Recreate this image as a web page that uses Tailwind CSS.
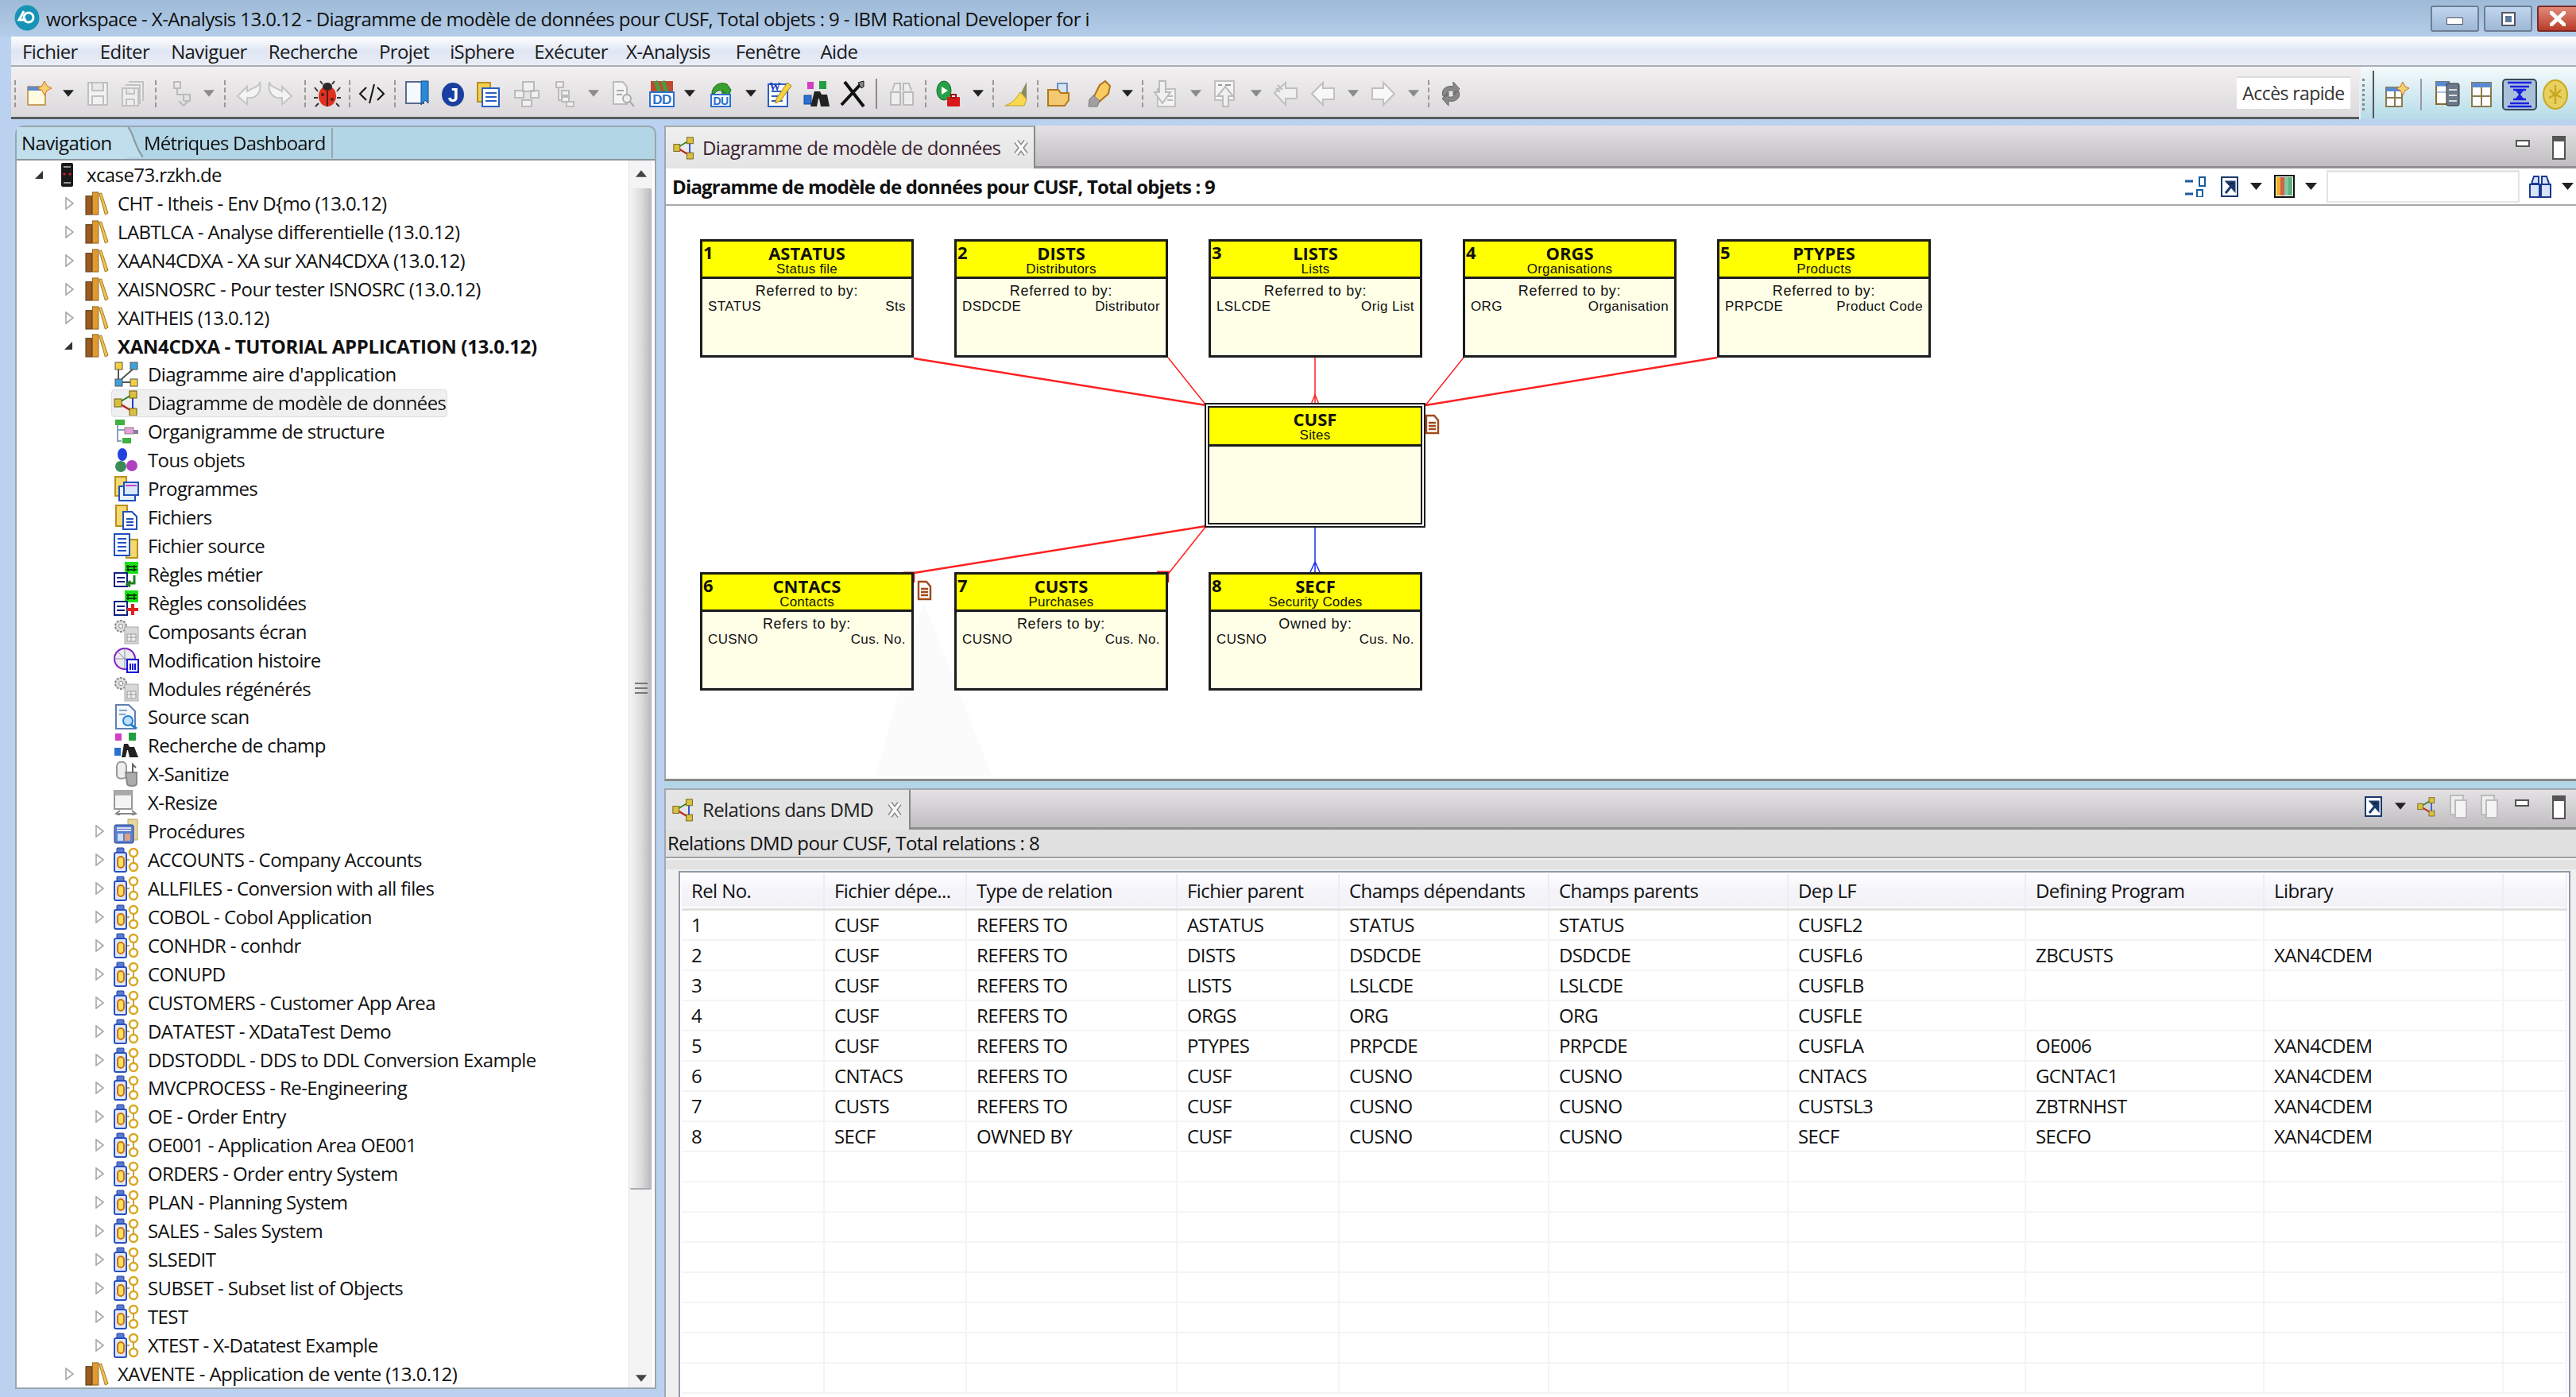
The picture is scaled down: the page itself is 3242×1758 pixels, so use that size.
<!DOCTYPE html>
<html lang="fr">
<head>
<meta charset="UTF-8">
<title>workspace - X-Analysis 13.0.12</title>
<script src="https://cdn.jsdelivr.net/npm/@tailwindcss/browser@4"></script>
</head>
<body class="w-[3242px] h-[1758px] overflow-hidden bg-[#bad2f0] blur-[0.6px] font-['Open_Sans',sans-serif] text-[24px] tracking-[-0.6px] text-[#111]">

<!-- shared icons -->
<svg class="hidden">
  <symbol id="dd" viewBox="0 0 15 9"><path d="M0 0h15L7.5 9z"/></symbol>
  <symbol id="closed" viewBox="0 0 12 16"><path d="M2 1l9 7-9 7z" fill="#fff" stroke="#a8a8a8" stroke-width="1.6"/></symbol>
  <symbol id="open" viewBox="0 0 14 14"><path d="M12 2v10H2z" fill="#333"/></symbol>
  <symbol id="lib" viewBox="0 0 32 32"><rect x="1" y="6" width="8" height="25" fill="#9a5a22" stroke="#5a3a18"/><rect x="10" y="1" width="8" height="30" fill="#e09a30" stroke="#8a5a18"/><path d="M19 3l3-1 9 27-4 2z" fill="#f0c050" stroke="#9a7a20"/></symbol>
  <symbol id="app" viewBox="0 0 32 32"><rect x="4" y="1" width="9" height="6" rx="1" fill="#5a7ad0" stroke="#2040a0"/><rect x="1" y="7" width="15" height="24" rx="2" fill="#dfe8f8" stroke="#2a50c0" stroke-width="2"/><rect x="5" y="12" width="8" height="14" rx="4" fill="#f8e060" stroke="#d07010" stroke-width="2"/><circle cx="25" cy="7" r="5" fill="none" stroke="#d8a820" stroke-width="2.500"/><circle cx="25" cy="25" r="5" fill="none" stroke="#d8a820" stroke-width="2.500"/><path d="M20 16h-3M25 12v8" stroke="#c8a040" stroke-width="2" fill="none"/></symbol>
  <symbol id="model" viewBox="0 0 32 32"><path d="M6 16l18 11" stroke="#c02020" stroke-width="2.500" fill="none"/><path d="M24 5v22" stroke="#2040d0" stroke-width="2"/><path d="M6 16l18-11" stroke="#208020" stroke-width="2"/><rect x="20" y="1" width="9" height="9" fill="#d8c040" stroke="#6a5a10"/><rect x="1" y="11" width="9" height="10" fill="#d8c040" stroke="#6a5a10"/><rect x="20" y="23" width="9" height="9" fill="#d8c040" stroke="#6a5a10"/></symbol>
  <symbol id="gears" viewBox="0 0 32 32"><circle cx="9" cy="9" r="7" fill="#ddd" stroke="#888" stroke-width="2" stroke-dasharray="3 1.5"/><circle cx="9" cy="9" r="2.5" fill="#fff" stroke="#888"/><rect x="14" y="10" width="17" height="21" fill="#d8d8d8" stroke="#aaa"/><path d="M17 19h11v9H17zM22 19v9M17 23h11" fill="#eee" stroke="#999"/></symbol>
  <symbol id="note" viewBox="0 0 19 26"><path d="M2 2h10l5 6v16H2zM5 11h9M5 15h9M5 19h9" fill="#fff" stroke="#a04a1a" stroke-width="2.4"/></symbol>
  <symbol id="x" viewBox="0 0 20 20"><path d="M4 2l12 16M16 2L4 18" stroke="#8a8a8a" stroke-width="6.500"/><path d="M4 2l12 16M16 2L4 18" stroke="#fafafa" stroke-width="3.500" fill="none"/></symbol>
</svg>

<!-- title bar -->
<div class="h-[46px] flex items-start bg-gradient-to-b from-[#9dbad6] to-[#b4cdea]">
  <svg class="ml-[18px] mt-[6px] w-[32px] h-[33px]" viewBox="0 0 32 33"><ellipse cx="16" cy="16.500" rx="15.500" ry="16" fill="#1793b5"/><circle cx="18" cy="16" r="6" fill="none" stroke="#fff" stroke-width="3"/><path d="M12 8l-6 11h9" fill="none" stroke="#fff" stroke-width="3"/></svg>
  <span class="ml-[8px] mt-[7px] leading-[33px] whitespace-nowrap">workspace - X-Analysis 13.0.12 - Diagramme de modèle de données pour CUSF, Total objets : 9 - IBM Rational Developer for i</span>
  <div class="ml-auto mt-[7px] flex gap-[6px]">
    <div class="w-[61px] h-[33px] flex justify-center items-end pb-[7px] rounded-[3px] border-2 border-[#6d7f95] bg-gradient-to-b from-[#c2d6ee] to-[#9db8d6]"><span class="block w-[21px] h-[9px] bg-white border border-[#556]"></span></div>
    <div class="w-[61px] h-[33px] flex justify-center items-center rounded-[3px] border-2 border-[#6d7f95] bg-gradient-to-b from-[#c2d6ee] to-[#9db8d6]"><span class="block w-[18px] h-[18px] bg-white border-[2px] border-[#556] p-[3px]"><span class="block w-full h-full bg-[#5a7a9a]"></span></span></div>
    <div class="w-[49px] h-[33px] flex justify-center items-center rounded-l-[3px] border-2 border-r-0 border-[#7a2a2a] bg-gradient-to-b from-[#e08a78] to-[#b83a28]"><svg class="w-[20px] h-[19px]" viewBox="0 0 20 19"><path d="M2 2l16 15M18 2L2 17" stroke="#fff" stroke-width="5" stroke-linecap="square"/></svg></div>
  </div>
</div>

<!-- menu bar -->
<div class="ml-[14px] h-[38px] relative bg-gradient-to-b from-white via-[#dfe6f3] to-[#e9edf6] border-b-2 border-[#a8aeb5] flex items-center text-[#1a1a1a] pt-[1px]">
  <span class="ml-[14px]">Fichier</span><span class="ml-[28px]">Editer</span><span class="ml-[27px]">Naviguer</span><span class="ml-[27px]">Recherche</span><span class="ml-[27px]">Projet</span><span class="ml-[26px]">iSphere</span><span class="ml-[25px]">Exécuter</span><span class="ml-[23px]">X-Analysis</span><span class="ml-[32px]">Fenêtre</span><span class="ml-[25px]">Aide</span>
</div>

<!-- main toolbar -->
<div class="ml-[14px] h-[66px] flex">
  <div class="flex-1 flex items-center bg-gradient-to-b from-[#f3f0f2] to-[#dbd9db] border-b-[3px] border-[#5a5a5a] pt-[4px]">
    <span class="ml-[4px] w-[2px] h-[34px] border-l-2 border-dashed border-[#999]"></span>
    <svg class="ml-[12px] w-[34px] h-[34px]" viewBox="0 0 34 34"><path d="M3 8h22v23H3z" fill="#fffbe0" stroke="#c8a060" stroke-width="2"/><path d="M3 8h22v5H3z" fill="#5a8ad0"/><path d="M24 1l3 6 6 3-6 3-3 6-3-6-6-3 6-3z" fill="#f8d070" stroke="#c87020"/></svg>
    <svg class="ml-[13px] w-[14px] h-[9px] fill-[#222]"><use href="#dd"/></svg>
    <svg class="ml-[13px] w-[34px] h-[34px]" viewBox="0 0 34 34"><path d="M5 3h24v28H5zM10 3v10h14V3M10 31V20h14v11" fill="#f2f2f2" stroke="#c0c0c0" stroke-width="2"/></svg>
    <svg class="ml-[11px] w-[34px] h-[34px]" viewBox="0 0 34 34"><path d="M11 2h18v24M7 6h18v24M3 10h20v22H3zM8 10v7h10v-7M8 32v-8h10v8" fill="#eee" stroke="#c2c2c2" stroke-width="2"/></svg>
    <span class="ml-[10px] w-[2px] h-[34px] border-l-2 border-dashed border-[#999]"></span>
    <svg class="ml-[14px] w-[34px] h-[34px]" viewBox="0 0 34 34"><path d="M8 2h8v8H8zM12 10v8h8v8M20 18h8v8h-8M14 26l6 6 6-6" fill="none" stroke="#bbb" stroke-width="2"/></svg>
    <svg class="ml-[11px] w-[14px] h-[9px] fill-[#8a8a8a]"><use href="#dd"/></svg>
    <span class="ml-[12px] w-[2px] h-[34px] border-l-2 border-dashed border-[#999]"></span>
    <svg class="ml-[11px] w-[34px] h-[34px]" viewBox="0 0 34 34"><path d="M4 20l12-12v6c10-6 16-6 16-12 2 10-2 22-16 20v8z" fill="#f4f4f4" stroke="#c4c4c4" stroke-width="2"/></svg>
    <svg class="ml-[8px] w-[34px] h-[34px]" viewBox="0 0 34 34"><path d="M30 20L18 8v6C8 8 2 8 2 2c-2 10 2 22 16 20v8z" fill="#f4f4f4" stroke="#c4c4c4" stroke-width="2"/></svg>
    <span class="ml-[12px] w-[2px] h-[34px] border-l-2 border-dashed border-[#999]"></span>
    <svg class="ml-[10px] w-[34px] h-[34px]" viewBox="0 0 34 34"><path d="M5 14L1 9M5 22H0M6 29l-4 4M29 14l4-5M29 22h5M28 29l4 4M11 5L8 1M23 5l3-4" stroke="#333" stroke-width="2"/><ellipse cx="17" cy="20" rx="11" ry="13" fill="#e03020"/><ellipse cx="17" cy="8" rx="6" ry="5" fill="#2a2a2a"/><path d="M17 9v24" stroke="#502010" stroke-width="2"/><circle cx="11" cy="18" r="2" fill="#502010"/><circle cx="23" cy="24" r="2" fill="#502010"/></svg>
    <span class="ml-[10px] w-[2px] h-[34px] border-l-2 border-dashed border-[#999]"></span>
    <svg class="ml-[10px] w-[34px] h-[34px]" viewBox="0 0 34 34"><path d="M10 9L2 17l8 8M24 9l8 8-8 8M20 5l-6 24" fill="none" stroke="#111" stroke-width="2"/></svg>
    <span class="ml-[11px] w-[2px] h-[34px] border-l-2 border-dashed border-[#999]"></span>
    <svg class="ml-[10px] w-[34px] h-[34px]" viewBox="0 0 34 34"><path d="M3 2h22v27H3z" fill="#f4f8ff" stroke="#5a6a90" stroke-width="2"/><path d="M22 1h9v28l-4-4-5 6z" fill="#2a8ad8" stroke="#104a90"/></svg>
    <svg class="ml-[11px] w-[34px] h-[34px]" viewBox="0 0 34 34"><ellipse cx="17" cy="18" rx="14" ry="15" fill="#1a3fa0"/><text x="17" y="27" text-anchor="middle" font-size="24" font-weight="700" fill="#fff" font-family="Liberation Sans">J</text></svg>
    <svg class="ml-[10px] w-[34px] h-[34px]" viewBox="0 0 34 34"><path d="M4 3h16v24H4z" fill="#f4d050" stroke="#b89020" stroke-width="2"/><path d="M10 10h21v23H10z" fill="#fff" stroke="#2a60c0" stroke-width="2"/><path d="M14 16h14M14 21h14M14 26h14" stroke="#2a60c0" stroke-width="2"/></svg>
    <svg class="ml-[15px] w-[34px] h-[34px]" viewBox="0 0 34 34"><path d="M12 2h14v12H12zM2 13h11v9H2zM22 13h10v9H22zM11 25h12v8H11z" fill="#f0f0f0" stroke="#bbb" stroke-width="2"/></svg>
    <svg class="ml-[13px] w-[34px] h-[34px]" viewBox="0 0 34 34"><path d="M7 2h9v7H7zM14 13h9v6h-9zM14 21h9v6h-9zM20 27h9v6h-9zM10 9v16h4" fill="#f0f0f0" stroke="#bbb" stroke-width="2"/></svg>
    <svg class="ml-[13px] w-[14px] h-[9px] fill-[#8a8a8a]"><use href="#dd"/></svg>
    <svg class="ml-[13px] w-[34px] h-[34px]" viewBox="0 0 34 34"><path d="M5 2h12l5 6v22H5z" fill="#f4f4f4" stroke="#bbb" stroke-width="2"/><circle cx="22" cy="23" r="5" fill="#eee" stroke="#aaa" stroke-width="2"/><path d="M26 27l5 6M9 13h9M9 18h7" stroke="#aaa" stroke-width="2"/></svg>
    <svg class="ml-[15px] w-[34px] h-[34px]" viewBox="0 0 34 34"><path d="M3 1h28v16H3z" fill="#c04a30"/><path d="M9 1l6 16M18 1l6 16" stroke="#4a9a40" stroke-width="5"/><rect x="2" y="15" width="30" height="18" fill="#fff" stroke="#2a70d0" stroke-width="2"/><text x="17" y="30" text-anchor="middle" font-size="17" font-weight="700" fill="#2a70d0" font-family="Liberation Sans">DD</text></svg>
    <svg class="ml-[11px] w-[14px] h-[9px] fill-[#222]"><use href="#dd"/></svg>
    <svg class="ml-[16px] w-[34px] h-[34px]" viewBox="0 0 34 34"><path d="M5 17C5 7 15 1 24 5l5 7-2 5-6 6-4-9 5 2c-3-4-10-5-14 1z" fill="#38a030" stroke="#1a6a18"/><rect x="4" y="18" width="24" height="15" fill="#fff" stroke="#2a70d0" stroke-width="2"/><text x="16" y="31" text-anchor="middle" font-size="14" font-weight="700" fill="#2a70d0" font-family="Liberation Sans">DU</text></svg>
    <svg class="ml-[13px] w-[14px] h-[9px] fill-[#222]"><use href="#dd"/></svg>
    <svg class="ml-[12px] w-[34px] h-[34px]" viewBox="0 0 34 34"><path d="M3 5h24v28H3z" fill="#fff" stroke="#2a60c0" stroke-width="2"/><path d="M7 14h14M7 20h12M7 26h14" stroke="#2a60c0" stroke-width="2"/><text x="11" y="13" text-anchor="middle" font-size="14" font-weight="700" fill="#2040c0" font-family="Liberation Serif">W</text><path d="M27 3l5 4-14 19-6 3 1-6z" fill="#f8d040" stroke="#a08020"/></svg>
    <svg class="ml-[13px] w-[34px] h-[34px]" viewBox="0 0 34 34"><rect x="5" y="2" width="8" height="9" fill="#d040c0"/><rect x="20" y="1" width="9" height="10" fill="#20a040"/><rect x="1" y="19" width="9" height="11" fill="#2a70d0" stroke="#104a90"/><path d="M14 14h7l2 4h7l3 15h-11l-2-10h-1l-2 10h-8z" fill="#222"/></svg>
    <svg class="ml-[11px] w-[34px] h-[34px]" viewBox="0 0 34 34"><path d="M7 2l24 31M3 31L28 4" stroke="#111" stroke-width="4"/><path d="M24 3l7-2v7l-3 2z" fill="#888" stroke="#111"/></svg>
    <span class="ml-[12px] w-[2px] h-[38px] bg-[#8a8a8a]"></span>
    <svg class="ml-[14px] w-[34px] h-[34px]" viewBox="0 0 34 34"><path d="M5 13l3-9h7v9M19 13V4h7l3 9M3 31V15h12v16zM19 31V15h12v16z" fill="#eee" stroke="#bbb" stroke-width="2"/></svg>
    <span class="ml-[12px] w-[2px] h-[34px] border-l-2 border-dashed border-[#999]"></span>
    <svg class="ml-[10px] w-[34px] h-[34px]" viewBox="0 0 34 34"><ellipse cx="12" cy="13" rx="9" ry="12" fill="#28a048" stroke="#106828"/><path d="M9 8l8 5-8 5z" fill="#fff"/><rect x="16" y="21" width="16" height="12" rx="1" fill="#d81818"/><rect x="21" y="18" width="6" height="4" fill="none" stroke="#a01010" stroke-width="2"/></svg>
    <svg class="ml-[14px] w-[14px] h-[9px] fill-[#222]"><use href="#dd"/></svg>
    <span class="ml-[11px] w-[2px] h-[34px] border-l-2 border-dashed border-[#999]"></span>
    <svg class="ml-[11px] w-[34px] h-[34px]" viewBox="0 0 34 34"><path d="M30 2l-7 14 7 8z" fill="#8a8a60"/><path d="M22 15l8 9-3 8H3c9-3 14-9 19-17z" fill="#f8d850" stroke="#c0a020"/></svg>
    <span class="ml-[9px] w-[2px] h-[34px] border-l-2 border-dashed border-[#999]"></span>
    <svg class="ml-[9px] w-[34px] h-[34px]" viewBox="0 0 34 34"><rect x="15" y="4" width="12" height="18" fill="#d8e4f4" stroke="#7090c0" stroke-width="2"/><path d="M3 12h13l3 4h10v9l-5 7H3z" fill="#f4c870" stroke="#b07820" stroke-width="2"/></svg>
    <svg class="ml-[15px] w-[34px] h-[34px]" viewBox="0 0 34 34"><path d="M26 1l6 6-2 10-15 13-5-6L19 6z" fill="#f8cc60" stroke="#b07020" stroke-width="2"/><path d="M11 19l8 7-3 7H5l1-9z" fill="#a0a0a0" stroke="#777"/></svg>
    <svg class="ml-[13px] w-[14px] h-[9px] fill-[#222]"><use href="#dd"/></svg>
    <span class="ml-[11px] w-[2px] h-[34px] border-l-2 border-dashed border-[#999]"></span>
    <svg class="ml-[10px] w-[34px] h-[34px]" viewBox="0 0 34 34"><path d="M8 11h22v22H8z" fill="#f4f4f4" stroke="#c0c0c0" stroke-width="2"/><path d="M10 1h8v14h6L14 29 4 15h6z" fill="#f0f0f0" stroke="#bbb" stroke-width="2"/><path d="M20 20h7M20 25h7" stroke="#bbb" stroke-width="2"/></svg>
    <svg class="ml-[15px] w-[14px] h-[9px] fill-[#8a8a8a]"><use href="#dd"/></svg>
    <svg class="ml-[13px] w-[34px] h-[34px]" viewBox="0 0 34 34"><path d="M4 1h24v24H4z" fill="#f4f4f4" stroke="#c0c0c0" stroke-width="2"/><path d="M14 33V20H7L17 8l10 12h-6v13z" fill="#f0f0f0" stroke="#bbb" stroke-width="2"/><path d="M8 6h5M17 6h7" stroke="#999" stroke-width="2"/></svg>
    <svg class="ml-[15px] w-[14px] h-[9px] fill-[#8a8a8a]"><use href="#dd"/></svg>
    <svg class="ml-[14px] w-[34px] h-[34px]" viewBox="0 0 34 34"><path d="M2 16L16 3v7h14v13H16v8z" fill="#f0f0f0" stroke="#c0c0c0" stroke-width="2"/><path d="M6 6l6 6M4 10l5 5" stroke="#bbb" stroke-width="2"/></svg>
    <svg class="ml-[12px] w-[34px] h-[34px]" viewBox="0 0 34 34"><path d="M3 17L17 3v7h14v14H17v7z" fill="#f8f8f8" stroke="#c0c0c0" stroke-width="2"/></svg>
    <svg class="ml-[14px] w-[14px] h-[9px] fill-[#8a8a8a]"><use href="#dd"/></svg>
    <svg class="ml-[14px] w-[34px] h-[34px]" viewBox="0 0 34 34"><path d="M31 17L17 3v7H3v14h14v7z" fill="#f8f8f8" stroke="#c0c0c0" stroke-width="2"/></svg>
    <svg class="ml-[14px] w-[14px] h-[9px] fill-[#8a8a8a]"><use href="#dd"/></svg>
    <span class="ml-[11px] w-[2px] h-[34px] border-l-2 border-dashed border-[#999]"></span>
    <svg class="ml-[10px] w-[34px] h-[34px]" viewBox="0 0 34 34"><path d="M7 20c-3-9 5-14 13-12V2l8 9-8 8v-6c-6-1-9 2-8 7zM27 14c3 9-5 14-13 12v6l-8-9 8-8v6c6 1 9-2 8-7z" fill="#888" stroke="#666"/></svg>
    <div class="ml-auto mr-[11px] -mt-[3px] w-[143px] h-[41px] flex items-center justify-center bg-white border-t-2 border-[#ddd] text-[#333] text-[23px]">Accès rapide</div>
  </div>
  <div class="w-[273px] flex items-center bg-gradient-to-b from-[#f4fafc] to-[#b5dce8] border-l-2 border-[#eee] pt-[4px]">
    <span class="ml-[2px] w-[2px] h-[40px] border-l-[3px] border-dotted border-[#888]"></span>
    <span class="ml-[10px] w-[2px] h-[60px] bg-[#555]"></span>
    <svg class="ml-[14px] w-[30px] h-[32px]" viewBox="0 0 30 32"><path d="M1 7h20v24H1z" fill="#fff" stroke="#8a7a50" stroke-width="2"/><path d="M1 7h20v5H1z" fill="#5a8ad0"/><path d="M12 12v19M1 20h20" stroke="#8a7a50" stroke-width="2"/><path d="M22 0l3 6 5 2-5 3-3 6-3-6-5-3 5-2z" fill="#f8d070" stroke="#c87020"/></svg>
    <span class="ml-[14px] w-[2px] h-[40px] bg-[#99a]"></span>
    <svg class="ml-[17px] w-[32px] h-[34px]" viewBox="0 0 32 34"><path d="M1 1h16v28H1z" fill="#fff" stroke="#8a6a30" stroke-width="2"/><path d="M1 1h16v5H1zM1 14h16" fill="#5a8ad0" stroke="#5a8ad0"/><rect x="14" y="3" width="16" height="28" rx="2" fill="#6a7a8a" stroke="#333"/><path d="M17 11h10M17 18h10M17 25h10" stroke="#ddd" stroke-width="2"/></svg>
    <svg class="ml-[13px] w-[26px] h-[32px]" viewBox="0 0 26 32"><path d="M1 1h24v30H1z" fill="#fff" stroke="#8a7a50" stroke-width="2"/><path d="M1 1h24v6H1z" fill="#5a8ad0"/><path d="M13 7v24M1 18h24" stroke="#8a7a50" stroke-width="2"/></svg>
    <div class="ml-[13px] w-[44px] h-[40px] flex items-center justify-center rounded-[5px] border-2 border-[#3a4a5a] bg-[#a8c0d8]"><svg class="w-[32px] h-[34px]" viewBox="0 0 32 34"><path d="M1 2h30M4 7h24M8 11h16M8 23h16M4 28h24M1 32h30" stroke="#1a20e0" stroke-width="2.500"/><path d="M11 12h10l-4 5 4 5H11l4-5z" fill="#1a20e0"/></svg></div>
    <svg class="ml-[7px] w-[32px] h-[38px]" viewBox="0 0 32 38"><ellipse cx="16" cy="19" rx="15" ry="18" fill="#e8d060" stroke="#c8a820" stroke-width="2"/><path d="M16 7v24M9 13l7 7 7-7M8 23l8-4 8 4" stroke="#c8a820" stroke-width="2.500" fill="none"/></svg>
  </div>
</div>

<!-- workbench -->
<div class="h-[1608px] pt-[8px] flex">

  <!-- navigator -->
  <div class="ml-[19px] w-[807px] h-[1590px] flex flex-col border-t-2 border-x-2 border-b-2 border-[#9aa5ad] rounded-t-[10px] bg-[#b3d6e6]">
    <div class="h-[40px] relative flex items-center shrink-0">
      <div class="w-[138px] pl-[6px] h-full flex items-center bg-[#c0deec] whitespace-nowrap">Navigation</div>
      <svg class="w-[22px] h-[40px] -ml-[1px]" viewBox="0 0 22 40"><path d="M0 0h3c6 4 8 24 19 38H0z" fill="#c0deec" stroke="none"/><path d="M3 0c6 4 8 24 19 38" fill="none" stroke="#8a959d" stroke-width="2"/></svg>
      <span class="ml-[1px] tracking-[-0.8px]">Métriques Dashboard</span>
      <span class="ml-[7px] w-[2px] h-[38px] bg-[#99a5ad]"></span>
    </div>
    <div class="h-[2px] bg-[#8a959d] shrink-0"></div>
    <div class="flex-1 flex bg-white min-h-0">
      <div class="flex-1 [&>div]:h-[35.93px] [&>div]:flex [&>div]:items-center whitespace-nowrap overflow-hidden">
        <div class="pl-[21px]"><svg class="w-[14px] h-[14px]"><use href="#open"/></svg><svg class="ml-[12px] w-[32px] h-[32px]" viewBox="0 0 32 32"><rect x="9" y="1" width="15" height="30" rx="2" fill="#1a1a1a"/><path d="M12 6h9M12 26h9" stroke="#999" stroke-width="2"/><circle cx="13" cy="15" r="1.600" fill="#e02020"/><circle cx="20" cy="15" r="1.600" fill="#e02020"/></svg><span class="ml-[9px]">xcase73.rzkh.de</span></div>
        <div class="pl-[60px]"><svg class="w-[12px] h-[16px]"><use href="#closed"/></svg><svg class="ml-[14px] w-[30px] h-[32px]"><use href="#lib"/></svg><span class="ml-[11px]">CHT - Itheis - Env D{mo (13.0.12)</span></div>
        <div class="pl-[60px]"><svg class="w-[12px] h-[16px]"><use href="#closed"/></svg><svg class="ml-[14px] w-[30px] h-[32px]"><use href="#lib"/></svg><span class="ml-[11px]">LABTLCA - Analyse differentielle (13.0.12)</span></div>
        <div class="pl-[60px]"><svg class="w-[12px] h-[16px]"><use href="#closed"/></svg><svg class="ml-[14px] w-[30px] h-[32px]"><use href="#lib"/></svg><span class="ml-[11px]">XAAN4CDXA - XA sur XAN4CDXA (13.0.12)</span></div>
        <div class="pl-[60px]"><svg class="w-[12px] h-[16px]"><use href="#closed"/></svg><svg class="ml-[14px] w-[30px] h-[32px]"><use href="#lib"/></svg><span class="ml-[11px]">XAISNOSRC - Pour tester ISNOSRC (13.0.12)</span></div>
        <div class="pl-[60px]"><svg class="w-[12px] h-[16px]"><use href="#closed"/></svg><svg class="ml-[14px] w-[30px] h-[32px]"><use href="#lib"/></svg><span class="ml-[11px]">XAITHEIS (13.0.12)</span></div>
        <div class="pl-[58px]"><svg class="w-[14px] h-[14px]"><use href="#open"/></svg><svg class="ml-[14px] w-[30px] h-[32px]"><use href="#lib"/></svg><span class="ml-[11px] font-bold tracking-[-0.35px]">XAN4CDXA - TUTORIAL APPLICATION (13.0.12)</span></div>
        <div class="pl-[122px]"><svg class="w-[32px] h-[32px]" viewBox="0 0 32 32"><path d="M6 10v12M10 22L26 8M10 26h12" stroke="#555" stroke-width="2"/><rect x="2" y="1" width="9" height="9" fill="#f4d040" stroke="#555"/><rect x="21" y="1" width="9" height="9" fill="#40a0d8" stroke="#555"/><rect x="2" y="22" width="9" height="9" fill="#40a0d8" stroke="#555"/><rect x="21" y="22" width="9" height="9" fill="#f4d040" stroke="#555"/></svg><span class="ml-[11px]">Diagramme aire d'application</span></div>
        <div class="pl-[122px]"><div class="absolute -ml-[3px] w-[423px] h-[35px] rounded-[4px] bg-[#efefef] border border-[#ddd]"></div><svg class="relative w-[32px] h-[32px]"><use href="#model"/></svg><span class="relative ml-[11px]">Diagramme de modèle de données</span></div>
        <div class="pl-[122px]"><svg class="w-[32px] h-[32px]" viewBox="0 0 32 32"><path d="M5 8v20h5M5 14h10" stroke="#8aa0c0" stroke-width="2" fill="none"/><rect x="2" y="1" width="12" height="7" fill="#40b040"/><rect x="14" y="11" width="11" height="8" fill="#e8a0d8" stroke="#888"/><rect x="25" y="14" width="6" height="5" fill="#8a7aa0"/><rect x="11" y="24" width="11" height="7" fill="#40b040"/></svg><span class="ml-[11px]">Organigramme de structure</span></div>
        <div class="pl-[122px]"><svg class="w-[32px] h-[32px]" viewBox="0 0 32 32"><ellipse cx="11" cy="9" rx="6" ry="8" fill="#2040e0"/><circle cx="9" cy="24" r="7" fill="#3a8a5a"/><circle cx="23" cy="23" r="7" fill="#b040c0"/></svg><span class="ml-[11px]">Tous objets</span></div>
        <div class="pl-[122px]"><svg class="w-[32px] h-[32px]" viewBox="0 0 32 32"><path d="M2 1h14v24H2z" fill="#f4d870" stroke="#b89020" stroke-width="2"/><path d="M7 13h20v18H7z" fill="#e8f0fc" stroke="#2050c0" stroke-width="2"/><path d="M13 8h18v16H13z" fill="#d8e8fc" stroke="#2050c0" stroke-width="2"/><path d="M15 12h14" stroke="#d040c0" stroke-width="2"/></svg><span class="ml-[11px]">Programmes</span></div>
        <div class="pl-[122px]"><svg class="w-[32px] h-[32px]" viewBox="0 0 32 32"><path d="M3 1h14v26H3z" fill="#f4d870" stroke="#b89020" stroke-width="2"/><path d="M12 9h11l6 6v16H12z" fill="#fff" stroke="#2050c0" stroke-width="2"/><path d="M16 18h9M16 22h9M16 26h9" stroke="#2050c0" stroke-width="2"/></svg><span class="ml-[11px]">Fichiers</span></div>
        <div class="pl-[122px]"><svg class="w-[32px] h-[32px]" viewBox="0 0 32 32"><path d="M16 8h14v23H16z" fill="#f4d870" stroke="#b89020" stroke-width="2"/><path d="M1 1h19v27H1z" fill="#f4f8ff" stroke="#2050c0" stroke-width="2"/><path d="M5 7h11M5 12h11M5 17h11M5 22h11" stroke="#2050c0" stroke-width="2"/></svg><span class="ml-[11px]">Fichier source</span></div>
        <div class="pl-[122px]"><svg class="w-[32px] h-[32px]" viewBox="0 0 32 32"><rect x="14" y="0" width="17" height="15" fill="#18e018"/><path d="M18 4v8M26 4v8M16 6h13M16 10h13" stroke="#084808" stroke-width="2"/><rect x="1" y="14" width="16" height="17" fill="#fff" stroke="#102080" stroke-width="2"/><path d="M4 20h10M4 25h10" stroke="#102080" stroke-width="2"/><path d="M26 17v10h-8M21 24l-4 4 4 3" fill="none" stroke="#208020" stroke-width="3"/></svg><span class="ml-[11px]">Règles métier</span></div>
        <div class="pl-[122px]"><svg class="w-[32px] h-[32px]" viewBox="0 0 32 32"><rect x="14" y="0" width="17" height="15" fill="#18e018"/><path d="M18 4v8M26 4v8M16 6h13M16 10h13" stroke="#084808" stroke-width="2"/><rect x="1" y="14" width="16" height="17" fill="#fff" stroke="#102080" stroke-width="2"/><path d="M4 20h10M4 25h10" stroke="#102080" stroke-width="2"/><path d="M24 17v14M17 24h14" stroke="#e02020" stroke-width="4"/></svg><span class="ml-[11px]">Règles consolidées</span></div>
        <div class="pl-[122px]"><svg class="w-[32px] h-[32px]"><use href="#gears"/></svg><span class="ml-[11px]">Composants écran</span></div>
        <div class="pl-[122px]"><svg class="w-[32px] h-[32px]" viewBox="0 0 32 32"><circle cx="14" cy="14" r="13" fill="#e8eaf0" stroke="#8020c0" stroke-width="2"/><path d="M1 14h26M14 1v26M5 5l18 18" stroke="#8a8a9a"/><rect x="17" y="15" width="14" height="16" fill="#fff" stroke="#1010e0" stroke-width="2"/><path d="M21 20v8M24 20v8M27 20v8" stroke="#1010e0" stroke-width="2"/></svg><span class="ml-[11px]">Modification histoire</span></div>
        <div class="pl-[122px]"><svg class="w-[32px] h-[32px]"><use href="#gears"/></svg><span class="ml-[11px]">Modules régénérés</span></div>
        <div class="pl-[122px]"><svg class="w-[32px] h-[32px]" viewBox="0 0 32 32"><path d="M3 1h16l8 8v22H3z" fill="#f4f8ff" stroke="#6080b0" stroke-width="2"/><path d="M7 8h10M7 13h8" stroke="#8aa0c0" stroke-width="2"/><circle cx="18" cy="21" r="6" fill="#bfe0fa" stroke="#2080d0" stroke-width="2"/><path d="M22 26l7 5" stroke="#2080d0" stroke-width="3"/></svg><span class="ml-[11px]">Source scan</span></div>
        <div class="pl-[122px]"><svg class="w-[32px] h-[32px]" viewBox="0 0 32 32"><rect x="2" y="1" width="8" height="9" fill="#d040c0"/><rect x="19" y="0" width="9" height="10" fill="#20a040"/><rect x="1" y="19" width="8" height="10" fill="#2a70d0"/><path d="M13 14h5l2 4h6l5 13H20l-2-9h-1l-2 9H10z" fill="#222"/></svg><span class="ml-[11px]">Recherche de champ</span></div>
        <div class="pl-[122px]"><svg class="w-[32px] h-[32px]" viewBox="0 0 32 32"><path d="M4 6c0-7 12-7 12 0v12c0 5-12 5-12 0z" fill="#eee" stroke="#999" stroke-width="2"/><path d="M15 14h14v14c0 4-12 4-12 0z" fill="#aaa" stroke="#888" stroke-width="2"/><path d="M24 14V4l4 4" stroke="#666" stroke-width="2" fill="none"/></svg><span class="ml-[11px]">X-Sanitize</span></div>
        <div class="pl-[122px]"><svg class="w-[32px] h-[32px]" viewBox="0 0 32 32"><rect x="1" y="0" width="22" height="24" fill="#f4f4f4" stroke="#999" stroke-width="2"/><rect x="1" y="0" width="22" height="7" fill="#aaa"/><path d="M3 30h25M8 26l-5 4 5 2M23 26l5 4-5 2" stroke="#888" stroke-width="2" fill="none"/></svg><span class="ml-[11px]">X-Resize</span></div>
        <div class="pl-[98px]"><svg class="w-[12px] h-[16px]"><use href="#closed"/></svg><svg class="ml-[12px] w-[32px] h-[32px]" viewBox="0 0 32 32"><path d="M18 1h12v26H18z" fill="#e8d8a0" stroke="#b8a060"/><rect x="1" y="8" width="24" height="23" rx="2" fill="#5a80d0" stroke="#203a90"/><path d="M4 12h18M4 15h18" stroke="#dde" stroke-width="2"/><rect x="5" y="19" width="7" height="9" fill="#cde"/><rect x="14" y="19" width="7" height="9" fill="#e0a080"/></svg><span class="ml-[11px]">Procédures</span></div>
        <div class="pl-[98px]"><svg class="w-[12px] h-[16px]"><use href="#closed"/></svg><svg class="ml-[12px] w-[32px] h-[32px]"><use href="#app"/></svg><span class="ml-[11px]">ACCOUNTS - Company Accounts</span></div>
        <div class="pl-[98px]"><svg class="w-[12px] h-[16px]"><use href="#closed"/></svg><svg class="ml-[12px] w-[32px] h-[32px]"><use href="#app"/></svg><span class="ml-[11px]">ALLFILES - Conversion with all files</span></div>
        <div class="pl-[98px]"><svg class="w-[12px] h-[16px]"><use href="#closed"/></svg><svg class="ml-[12px] w-[32px] h-[32px]"><use href="#app"/></svg><span class="ml-[11px]">COBOL - Cobol Application</span></div>
        <div class="pl-[98px]"><svg class="w-[12px] h-[16px]"><use href="#closed"/></svg><svg class="ml-[12px] w-[32px] h-[32px]"><use href="#app"/></svg><span class="ml-[11px]">CONHDR - conhdr</span></div>
        <div class="pl-[98px]"><svg class="w-[12px] h-[16px]"><use href="#closed"/></svg><svg class="ml-[12px] w-[32px] h-[32px]"><use href="#app"/></svg><span class="ml-[11px]">CONUPD</span></div>
        <div class="pl-[98px]"><svg class="w-[12px] h-[16px]"><use href="#closed"/></svg><svg class="ml-[12px] w-[32px] h-[32px]"><use href="#app"/></svg><span class="ml-[11px]">CUSTOMERS - Customer App Area</span></div>
        <div class="pl-[98px]"><svg class="w-[12px] h-[16px]"><use href="#closed"/></svg><svg class="ml-[12px] w-[32px] h-[32px]"><use href="#app"/></svg><span class="ml-[11px]">DATATEST - XDataTest Demo</span></div>
        <div class="pl-[98px]"><svg class="w-[12px] h-[16px]"><use href="#closed"/></svg><svg class="ml-[12px] w-[32px] h-[32px]"><use href="#app"/></svg><span class="ml-[11px]">DDSTODDL - DDS to DDL Conversion Example</span></div>
        <div class="pl-[98px]"><svg class="w-[12px] h-[16px]"><use href="#closed"/></svg><svg class="ml-[12px] w-[32px] h-[32px]"><use href="#app"/></svg><span class="ml-[11px]">MVCPROCESS - Re-Engineering</span></div>
        <div class="pl-[98px]"><svg class="w-[12px] h-[16px]"><use href="#closed"/></svg><svg class="ml-[12px] w-[32px] h-[32px]"><use href="#app"/></svg><span class="ml-[11px]">OE - Order Entry</span></div>
        <div class="pl-[98px]"><svg class="w-[12px] h-[16px]"><use href="#closed"/></svg><svg class="ml-[12px] w-[32px] h-[32px]"><use href="#app"/></svg><span class="ml-[11px]">OE001 - Application Area OE001</span></div>
        <div class="pl-[98px]"><svg class="w-[12px] h-[16px]"><use href="#closed"/></svg><svg class="ml-[12px] w-[32px] h-[32px]"><use href="#app"/></svg><span class="ml-[11px]">ORDERS - Order entry System</span></div>
        <div class="pl-[98px]"><svg class="w-[12px] h-[16px]"><use href="#closed"/></svg><svg class="ml-[12px] w-[32px] h-[32px]"><use href="#app"/></svg><span class="ml-[11px]">PLAN - Planning System</span></div>
        <div class="pl-[98px]"><svg class="w-[12px] h-[16px]"><use href="#closed"/></svg><svg class="ml-[12px] w-[32px] h-[32px]"><use href="#app"/></svg><span class="ml-[11px]">SALES - Sales System</span></div>
        <div class="pl-[98px]"><svg class="w-[12px] h-[16px]"><use href="#closed"/></svg><svg class="ml-[12px] w-[32px] h-[32px]"><use href="#app"/></svg><span class="ml-[11px]">SLSEDIT</span></div>
        <div class="pl-[98px]"><svg class="w-[12px] h-[16px]"><use href="#closed"/></svg><svg class="ml-[12px] w-[32px] h-[32px]"><use href="#app"/></svg><span class="ml-[11px]">SUBSET - Subset list of Objects</span></div>
        <div class="pl-[98px]"><svg class="w-[12px] h-[16px]"><use href="#closed"/></svg><svg class="ml-[12px] w-[32px] h-[32px]"><use href="#app"/></svg><span class="ml-[11px]">TEST</span></div>
        <div class="pl-[98px]"><svg class="w-[12px] h-[16px]"><use href="#closed"/></svg><svg class="ml-[12px] w-[32px] h-[32px]"><use href="#app"/></svg><span class="ml-[11px]">XTEST - X-Datatest Example</span></div>
        <div class="pl-[60px]"><svg class="w-[12px] h-[16px]"><use href="#closed"/></svg><svg class="ml-[14px] w-[30px] h-[32px]"><use href="#lib"/></svg><span class="ml-[11px]">XAVENTE - Application de vente (13.0.12)</span></div>
      </div>
      <!-- scrollbar -->
      <div class="w-[30px] mr-[3px] flex flex-col items-center bg-[#f4f4f4] border-l border-[#e2e2e2]">
        <svg class="mt-[12px] w-[14px] h-[9px] fill-[#444] rotate-180 shrink-0"><use href="#dd"/></svg>
        <div class="mt-[14px] w-[27px] h-[1260px] flex items-center justify-center shrink-0 rounded-[2px] bg-gradient-to-r from-[#f4f4f4] via-[#ddd] to-[#b8b8bc] border-b-2 border-[#aaa]"><span class="block w-[16px] h-[14px] border-y-2 border-[#777] relative after:absolute after:inset-x-0 after:top-[4px] after:h-[2px] after:bg-[#777]"></span></div>
        <svg class="mt-auto mb-[7px] w-[14px] h-[9px] fill-[#444] shrink-0"><use href="#dd"/></svg>
      </div>
    </div>
  </div>

  <!-- editor and bottom view -->
  <div class="ml-[10px] flex-1 min-w-0 bg-[#b3d6e6] flex flex-col">

    <!-- diagram -->
    <div class="h-[825px] shrink-0 flex flex-col border-l-2 border-[#a0a8b0] bg-white border-b-[3px] border-b-[#888]">
      <div class="h-[54px] shrink-0 flex bg-gradient-to-b from-[#e4e2e4] to-[#bdbbbd]">
        <div class="w-[465px] flex items-center bg-gradient-to-b from-[#efefef] to-[#e4e4e4] border-r-2 border-[#888] border-t-2 border-t-[#aaa] text-[#3a2030]">
          <svg class="ml-[9px] w-[28px] h-[30px]"><use href="#model"/></svg>
          <span class="ml-[9px] whitespace-nowrap">Diagramme de modèle de données</span>
          <svg class="ml-[16px] w-[20px] h-[20px]"><use href="#x"/></svg>
        </div>
        <div class="flex-1 flex items-start justify-end border-b-[3px] border-[#8f8f8f] pt-[18px]">
          <span class="mr-[28px] w-[18px] h-[9px] bg-white border-2 border-[#555]"></span>
          <span class="mr-[13px] -mt-[5px] w-[17px] h-[30px] bg-white border-2 border-[#555] border-t-[7px]"></span>
        </div>
      </div>
      <div class="h-[47px] shrink-0 flex items-center border-b-2 border-[#a9a9a9]">
        <span class="ml-[8px] font-bold tracking-[-0.83px] whitespace-nowrap">Diagramme de modèle de données pour CUSF, Total objets : 9</span>
        <svg class="ml-auto w-[26px] h-[26px]" viewBox="0 0 26 26"><path d="M0 6h10M0 22h10" stroke="#1a5aa0" stroke-width="3"/><rect x="18" y="1" width="7" height="11" fill="#fff" stroke="#1a5aa0" stroke-width="2"/><rect x="15" y="17" width="7" height="9" fill="#fff" stroke="#1a5aa0" stroke-width="2"/></svg>
        <svg class="ml-[19px] w-[22px] h-[26px]" viewBox="0 0 22 26"><rect x="1" y="1" width="20" height="24" fill="#fff" stroke="#1a3a6a" stroke-width="2"/><path d="M6 21L15 10M8 7h9v10z" stroke="#1a3a6a" stroke-width="3"/></svg>
        <svg class="ml-[15px] w-[15px] h-[9px] fill-[#222]"><use href="#dd"/></svg>
        <svg class="ml-[15px] w-[26px] h-[29px]" viewBox="0 0 26 29"><rect x="1" y="1" width="24" height="27" fill="#fff" stroke="#111" stroke-width="2"/><path d="M3 3h5v23H3z" fill="#f0b020"/><path d="M8 3h5v23H8z" fill="#d06050"/><path d="M13 3h5v23h-5z" fill="#80c8a0"/><path d="M18 3h5v23h-5z" fill="#60b080"/></svg>
        <svg class="ml-[13px] w-[15px] h-[9px] fill-[#222]"><use href="#dd"/></svg>
        <div class="ml-[12px] w-[243px] h-[41px] border-2 border-t-[3px] border-[#e4e4e4] bg-white"></div>
        <svg class="ml-[11px] w-[30px] h-[28px]" viewBox="0 0 30 28"><path d="M4 10l3-9h6v9zM17 10V1h6l3 9M2 27V11h12v16zM16 27V11h12v16z" fill="#d8e4f8" stroke="#1a3a90" stroke-width="2"/></svg>
        <svg class="ml-[12px] mr-[3px] w-[15px] h-[9px] fill-[#222]"><use href="#dd"/></svg>
      </div>

      <div class="relative flex-1 overflow-hidden">
        <!-- connectors, hand placed -->
        <svg class="absolute inset-0 w-full h-full" viewBox="0 0 2404 722" preserveAspectRatio="xMinYMin slice">
          <path d="M324 498L264 718H411z" fill="#fbfbfb"/>
          <g fill="none" stroke="#ff2020">
            <path d="M312 192L680 251M680 403L312 462M1323 191L956 251" stroke-width="2.500"/>
            <path d="M632 191L680 251M1004 191L956 251M817 191V248M680 403L634 461" stroke-width="1.500"/>
            <path d="M811 252L817 238L823 252" stroke-width="1.500"/>
            <path d="M678 251H700M680 251V268M938 251H956M299 462H313M618 461H634" stroke-width="3"/>
            <path d="M953 251V264M312 462V474M632 461V474" stroke="#c01010" stroke-width="2.500"/>
          </g>
          <g fill="none" stroke="#1a30e8" stroke-width="1.500"><path d="M817 405V461M811 461L817 448L823 461"/></g>
        </svg>

        <div class="absolute left-[43px] top-[42px] w-[269px] h-[149px] flex flex-col border-[3px] border-[#1c1c1c] bg-[#ffffe8]">
          <div class="relative h-[47px] bg-[#ffff00] border-b-[3px] border-[#1c1c1c] text-center leading-none"><span class="absolute left-[1px] top-[2px] text-[22px] font-bold tracking-normal">1</span><div class="mt-[3px] text-[22px] font-bold tracking-normal">ASTATUS</div><div class="mt-[1px] font-['Liberation_Sans',sans-serif] text-[17px] tracking-[0.2px]">Status file</div></div>
          <div class="px-[7px] pt-[5px] font-['Liberation_Sans',sans-serif] text-[17px] tracking-[0.4px] leading-[20px]"><div class="text-center text-[18px] tracking-[0.7px]">Referred to by:</div><div class="flex justify-between"><span>STATUS</span><span>Sts</span></div></div>
        </div>
        <div class="absolute left-[363px] top-[42px] w-[269px] h-[149px] flex flex-col border-[3px] border-[#1c1c1c] bg-[#ffffe8]">
          <div class="relative h-[47px] bg-[#ffff00] border-b-[3px] border-[#1c1c1c] text-center leading-none"><span class="absolute left-[1px] top-[2px] text-[22px] font-bold tracking-normal">2</span><div class="mt-[3px] text-[22px] font-bold tracking-normal">DISTS</div><div class="mt-[1px] font-['Liberation_Sans',sans-serif] text-[17px] tracking-[0.2px]">Distributors</div></div>
          <div class="px-[7px] pt-[5px] font-['Liberation_Sans',sans-serif] text-[17px] tracking-[0.4px] leading-[20px]"><div class="text-center text-[18px] tracking-[0.7px]">Referred to by:</div><div class="flex justify-between"><span>DSDCDE</span><span>Distributor</span></div></div>
        </div>
        <div class="absolute left-[683px] top-[42px] w-[269px] h-[149px] flex flex-col border-[3px] border-[#1c1c1c] bg-[#ffffe8]">
          <div class="relative h-[47px] bg-[#ffff00] border-b-[3px] border-[#1c1c1c] text-center leading-none"><span class="absolute left-[1px] top-[2px] text-[22px] font-bold tracking-normal">3</span><div class="mt-[3px] text-[22px] font-bold tracking-normal">LISTS</div><div class="mt-[1px] font-['Liberation_Sans',sans-serif] text-[17px] tracking-[0.2px]">Lists</div></div>
          <div class="px-[7px] pt-[5px] font-['Liberation_Sans',sans-serif] text-[17px] tracking-[0.4px] leading-[20px]"><div class="text-center text-[18px] tracking-[0.7px]">Referred to by:</div><div class="flex justify-between"><span>LSLCDE</span><span>Orig List</span></div></div>
        </div>
        <div class="absolute left-[1003px] top-[42px] w-[269px] h-[149px] flex flex-col border-[3px] border-[#1c1c1c] bg-[#ffffe8]">
          <div class="relative h-[47px] bg-[#ffff00] border-b-[3px] border-[#1c1c1c] text-center leading-none"><span class="absolute left-[1px] top-[2px] text-[22px] font-bold tracking-normal">4</span><div class="mt-[3px] text-[22px] font-bold tracking-normal">ORGS</div><div class="mt-[1px] font-['Liberation_Sans',sans-serif] text-[17px] tracking-[0.2px]">Organisations</div></div>
          <div class="px-[7px] pt-[5px] font-['Liberation_Sans',sans-serif] text-[17px] tracking-[0.4px] leading-[20px]"><div class="text-center text-[18px] tracking-[0.7px]">Referred to by:</div><div class="flex justify-between"><span>ORG</span><span>Organisation</span></div></div>
        </div>
        <div class="absolute left-[1323px] top-[42px] w-[269px] h-[149px] flex flex-col border-[3px] border-[#1c1c1c] bg-[#ffffe8]">
          <div class="relative h-[47px] bg-[#ffff00] border-b-[3px] border-[#1c1c1c] text-center leading-none"><span class="absolute left-[1px] top-[2px] text-[22px] font-bold tracking-normal">5</span><div class="mt-[3px] text-[22px] font-bold tracking-normal">PTYPES</div><div class="mt-[1px] font-['Liberation_Sans',sans-serif] text-[17px] tracking-[0.2px]">Products</div></div>
          <div class="px-[7px] pt-[5px] font-['Liberation_Sans',sans-serif] text-[17px] tracking-[0.4px] leading-[20px]"><div class="text-center text-[18px] tracking-[0.7px]">Referred to by:</div><div class="flex justify-between"><span>PRPCDE</span><span>Product Code</span></div></div>
        </div>

        <div class="absolute left-[678px] top-[248px] w-[278px] h-[157px] p-[2px] border-[2px] border-[#1c1c1c] bg-white">
          <div class="h-full flex flex-col border-[2px] border-[#1c1c1c] bg-[#ffffe8]">
            <div class="h-[49px] bg-[#ffff00] border-b-[3px] border-[#1c1c1c] text-center leading-none"><div class="mt-[3px] text-[22px] font-bold tracking-normal">CUSF</div><div class="mt-[1px] font-['Liberation_Sans',sans-serif] text-[17px] tracking-[0.2px]">Sites</div></div>
          </div>
        </div>
        <svg class="absolute left-[955px] top-[262px] w-[19px] h-[26px]"><use href="#note"/></svg>

        <div class="absolute left-[43px] top-[461px] w-[269px] h-[149px] flex flex-col border-[3px] border-[#1c1c1c] bg-[#ffffe8]">
          <div class="relative h-[47px] bg-[#ffff00] border-b-[3px] border-[#1c1c1c] text-center leading-none"><span class="absolute left-[1px] top-[2px] text-[22px] font-bold tracking-normal">6</span><div class="mt-[3px] text-[22px] font-bold tracking-normal">CNTACS</div><div class="mt-[1px] font-['Liberation_Sans',sans-serif] text-[17px] tracking-[0.2px]">Contacts</div></div>
          <div class="px-[7px] pt-[5px] font-['Liberation_Sans',sans-serif] text-[17px] tracking-[0.4px] leading-[20px]"><div class="text-center text-[18px] tracking-[0.7px]">Refers to by:</div><div class="flex justify-between"><span>CUSNO</span><span>Cus. No.</span></div></div>
        </div>
        <svg class="absolute left-[316px] top-[471px] w-[19px] h-[26px]"><use href="#note"/></svg>
        <div class="absolute left-[363px] top-[461px] w-[269px] h-[149px] flex flex-col border-[3px] border-[#1c1c1c] bg-[#ffffe8]">
          <div class="relative h-[47px] bg-[#ffff00] border-b-[3px] border-[#1c1c1c] text-center leading-none"><span class="absolute left-[1px] top-[2px] text-[22px] font-bold tracking-normal">7</span><div class="mt-[3px] text-[22px] font-bold tracking-normal">CUSTS</div><div class="mt-[1px] font-['Liberation_Sans',sans-serif] text-[17px] tracking-[0.2px]">Purchases</div></div>
          <div class="px-[7px] pt-[5px] font-['Liberation_Sans',sans-serif] text-[17px] tracking-[0.4px] leading-[20px]"><div class="text-center text-[18px] tracking-[0.7px]">Refers to by:</div><div class="flex justify-between"><span>CUSNO</span><span>Cus. No.</span></div></div>
        </div>
        <div class="absolute left-[683px] top-[461px] w-[269px] h-[149px] flex flex-col border-[3px] border-[#1c1c1c] bg-[#ffffe8]">
          <div class="relative h-[47px] bg-[#ffff00] border-b-[3px] border-[#1c1c1c] text-center leading-none"><span class="absolute left-[1px] top-[2px] text-[22px] font-bold tracking-normal">8</span><div class="mt-[3px] text-[22px] font-bold tracking-normal">SECF</div><div class="mt-[1px] font-['Liberation_Sans',sans-serif] text-[17px] tracking-[0.2px]">Security Codes</div></div>
          <div class="px-[7px] pt-[5px] font-['Liberation_Sans',sans-serif] text-[17px] tracking-[0.4px] leading-[20px]"><div class="text-center text-[18px] tracking-[0.7px]">Owned by:</div><div class="flex justify-between"><span>CUSNO</span><span>Cus. No.</span></div></div>
        </div>
      </div>
    </div>

    <!-- relations view -->
    <div class="mt-[9px] flex-1 min-h-0 flex flex-col overflow-hidden border-t-2 border-l-2 border-[#a0a8b0] bg-[#efefef]">
      <div class="h-[50px] shrink-0 flex bg-gradient-to-b from-[#e4e2e4] to-[#bdbbbd]">
        <div class="w-[308px] flex items-center bg-[#e4e4e4] border-r-2 border-[#888] text-[#222]">
          <svg class="ml-[8px] w-[28px] h-[30px]"><use href="#model"/></svg>
          <span class="ml-[10px] whitespace-nowrap">Relations dans DMD</span>
          <svg class="ml-[17px] w-[20px] h-[20px]"><use href="#x"/></svg>
        </div>
        <div class="flex-1 flex items-center justify-end border-b-[3px] border-[#8f8f8f] pb-[6px]">
          <svg class="w-[22px] h-[26px]" viewBox="0 0 22 26"><rect x="1" y="1" width="20" height="24" fill="#fff" stroke="#1a3a6a" stroke-width="2"/><path d="M6 21L15 10M8 7h9v10z" stroke="#1a3a6a" stroke-width="3"/></svg>
          <svg class="ml-[16px] w-[14px] h-[9px] fill-[#222]"><use href="#dd"/></svg>
          <svg class="ml-[14px] w-[24px] h-[28px]"><use href="#model"/></svg>
          <svg class="ml-[16px] w-[24px] h-[30px]" viewBox="0 0 24 30"><path d="M2 1h16v24H2z" fill="#eee" stroke="#bbb" stroke-width="2"/><path d="M8 7h14v22H8z" fill="#f4f4f4" stroke="#bbb" stroke-width="2"/></svg>
          <svg class="ml-[15px] w-[24px] h-[30px]" viewBox="0 0 24 30"><path d="M2 1h16v24H2z" fill="#eee" stroke="#bbb" stroke-width="2"/><path d="M8 7h14v22H8z" fill="#f4f4f4" stroke="#bbb" stroke-width="2"/></svg>
          <span class="ml-[20px] -mt-[8px] w-[18px] h-[9px] bg-white border-2 border-[#555]"></span>
          <span class="ml-[29px] mr-[13px] mt-[2px] w-[17px] h-[30px] bg-white border-2 border-[#555] border-t-[7px]"></span>
        </div>
      </div>
      <div class="h-[36px] shrink-0 pl-[2px] flex items-center bg-[#e0e0e0] border-b-2 border-[#a0a0a0] whitespace-nowrap">Relations DMD pour CUSF, Total relations : 8</div>
      <div class="h-[14px] shrink-0 bg-[#e2e2e2] border-t-2 border-[#f4f4f4]"></div>
      <div class="flex-1 ml-[16px] mr-[7px] mt-[2px] overflow-hidden bg-white border-t-2 border-l-2 border-r-2 border-[#8d99a6] pl-[2px] pt-[2px]">
        <table class="table-fixed border-collapse w-[2372px] text-left [&_th]:font-normal [&_th]:pl-[12px] [&_th]:border-r-2 [&_th]:border-[#eeeef2] [&_td]:pl-[12px] [&_td]:h-[38px] [&_td]:border-r-2 [&_td]:border-b-2 [&_td]:border-[#f5f3f7]">
          <colgroup><col class="w-[179px]"><col class="w-[179px]"><col class="w-[265px]"><col class="w-[204px]"><col class="w-[264px]"><col class="w-[301px]"><col class="w-[299px]"><col class="w-[300px]"><col class="w-[301px]"><col class="w-[80px]"></colgroup>
          <thead><tr class="h-[44px] bg-gradient-to-b from-white via-[#f4f4fa] to-[#f2f2f6] border-b-[3px] border-[#e0e0e0]"><th>Rel No.</th><th>Fichier dépe...</th><th>Type de relation</th><th>Fichier parent</th><th>Champs dépendants</th><th>Champs parents</th><th>Dep LF</th><th>Defining Program</th><th>Library</th><th></th></tr></thead>
          <tbody>
            <tr><td>1</td><td>CUSF</td><td>REFERS TO</td><td>ASTATUS</td><td>STATUS</td><td>STATUS</td><td>CUSFL2</td><td></td><td></td><td></td></tr>
            <tr><td>2</td><td>CUSF</td><td>REFERS TO</td><td>DISTS</td><td>DSDCDE</td><td>DSDCDE</td><td>CUSFL6</td><td>ZBCUSTS</td><td>XAN4CDEM</td><td></td></tr>
            <tr><td>3</td><td>CUSF</td><td>REFERS TO</td><td>LISTS</td><td>LSLCDE</td><td>LSLCDE</td><td>CUSFLB</td><td></td><td></td><td></td></tr>
            <tr><td>4</td><td>CUSF</td><td>REFERS TO</td><td>ORGS</td><td>ORG</td><td>ORG</td><td>CUSFLE</td><td></td><td></td><td></td></tr>
            <tr><td>5</td><td>CUSF</td><td>REFERS TO</td><td>PTYPES</td><td>PRPCDE</td><td>PRPCDE</td><td>CUSFLA</td><td>OE006</td><td>XAN4CDEM</td><td></td></tr>
            <tr><td>6</td><td>CNTACS</td><td>REFERS TO</td><td>CUSF</td><td>CUSNO</td><td>CUSNO</td><td>CNTACS</td><td>GCNTAC1</td><td>XAN4CDEM</td><td></td></tr>
            <tr><td>7</td><td>CUSTS</td><td>REFERS TO</td><td>CUSF</td><td>CUSNO</td><td>CUSNO</td><td>CUSTSL3</td><td>ZBTRNHST</td><td>XAN4CDEM</td><td></td></tr>
            <tr><td>8</td><td>SECF</td><td>OWNED BY</td><td>CUSF</td><td>CUSNO</td><td>CUSNO</td><td>SECF</td><td>SECFO</td><td>XAN4CDEM</td><td></td></tr>
            <tr><td></td><td></td><td></td><td></td><td></td><td></td><td></td><td></td><td></td><td></td></tr>
            <tr><td></td><td></td><td></td><td></td><td></td><td></td><td></td><td></td><td></td><td></td></tr>
            <tr><td></td><td></td><td></td><td></td><td></td><td></td><td></td><td></td><td></td><td></td></tr>
            <tr><td></td><td></td><td></td><td></td><td></td><td></td><td></td><td></td><td></td><td></td></tr>
            <tr><td></td><td></td><td></td><td></td><td></td><td></td><td></td><td></td><td></td><td></td></tr>
            <tr><td></td><td></td><td></td><td></td><td></td><td></td><td></td><td></td><td></td><td></td></tr>
            <tr><td></td><td></td><td></td><td></td><td></td><td></td><td></td><td></td><td></td><td></td></tr>
            <tr><td></td><td></td><td></td><td></td><td></td><td></td><td></td><td></td><td></td><td></td></tr>
          </tbody>
        </table>
      </div>
    </div>
  </div>
</div>
</body>
</html>
